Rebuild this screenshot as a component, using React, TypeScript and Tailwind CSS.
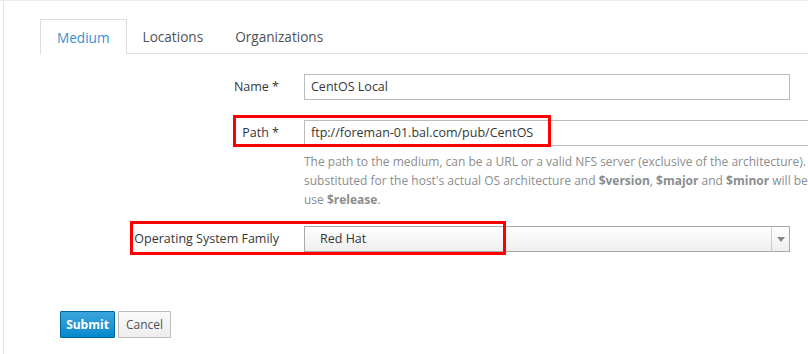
export default function App() {
  return (
    <div
      className="w-[808px] h-[354px] overflow-hidden bg-white border-t border-[#ececec] text-[#363636]"
      style={{ fontFamily: '"Open Sans", "Liberation Sans", sans-serif' }}
    >
      <div className="ml-[3px] h-full border-l border-[#e4e4e4] pl-[36px] pt-[18px]">
        {/* tabs */}
        <div className="flex border-b border-[#dedede] h-[35px] text-[13.6px]">
          <div className="px-[16px] pt-[2px] flex items-center border border-b-0 border-[#dedede] bg-white text-[#3a8fd2] -mb-px h-[35px]">
            Medium
          </div>
          <div className="px-[16px] pt-[2px] flex items-center text-[#4d5258]">Locations</div>
          <div className="px-[16px] pt-[2px] flex items-center text-[#4d5258]">Organizations</div>
        </div>

        <div className="pt-[20px] text-[12.5px]">
          {/* name */}
          <div className="flex items-center">
            <label className="w-[264px] shrink-0 pr-[25px] text-right text-[12.5px]">Name *</label>
            <div className="w-[486px] shrink-0 h-[26px] border border-[#bbbbbb] flex items-center px-[6px]">CentOS Local</div>
          </div>

          {/* path */}
          <div className="relative flex items-center mt-[20px]">
            <label className="w-[264px] shrink-0 pr-[25px] text-right text-[12.5px]">Path *</label>
            <div className="w-[540px] shrink-0 h-[26px] border border-[#bbbbbb] flex items-center px-[6px]">
              ftp://foreman-01.bal.com/pub/CentOS
            </div>
            <div className="absolute left-[193px] top-[-5px] w-[318px] h-[32px] border-[3px] border-[#ff0000]" />
          </div>
          <div className="ml-[264px] mt-[6px] text-[12px] leading-[19px] text-[#8b8d8f] whitespace-nowrap">
            <div>The path to the medium, can be a URL or a valid NFS server (exclusive of the architecture).</div>
            <div>
              substituted for the host's actual OS architecture and <b>$version</b>, <b>$major</b> and <b>$minor</b> will be
            </div>
            <div>
              use <b>$release</b>.
            </div>
          </div>

          {/* os family */}
          <div className="relative flex items-center mt-[17px]">
            <label className="w-[264px] shrink-0 pr-[25px] text-right text-[12.5px]">Operating System Family</label>
            <div className="w-[486px] shrink-0 h-[26px] border border-[#aaaaaa] flex items-stretch bg-gradient-to-b from-white to-[#eeeeee]">
              <div className="flex-1 flex items-center pl-[15px]">Red Hat</div>
              <div className="w-[18px] border-l border-[#cccccc] flex items-center justify-center">
                <svg width="8" height="5" viewBox="0 0 8 5">
                  <path d="M0 0 L8 0 L4 5 Z" fill="#888888" />
                </svg>
              </div>
            </div>
            <div className="absolute left-[90px] top-[-5px] w-[376px] h-[34px] border-[3px] border-[#ff0000]" />
          </div>

          {/* buttons */}
          <div className="flex gap-[3px] ml-[20px] mt-[59px]">
            <button className="h-[27px] w-[55px] rounded-[1px] border border-[#00659c] bg-gradient-to-b from-[#39a5dc] to-[#0088ce] text-white font-bold text-[12px]">
              Submit
            </button>
            <button className="h-[27px] w-[53px] rounded-[1px] border border-[#bbbbbb] bg-gradient-to-b from-[#fafafa] to-[#ededed] text-[#4d5258] text-[12px]">
              Cancel
            </button>
          </div>
        </div>
      </div>
    </div>
  )
}
